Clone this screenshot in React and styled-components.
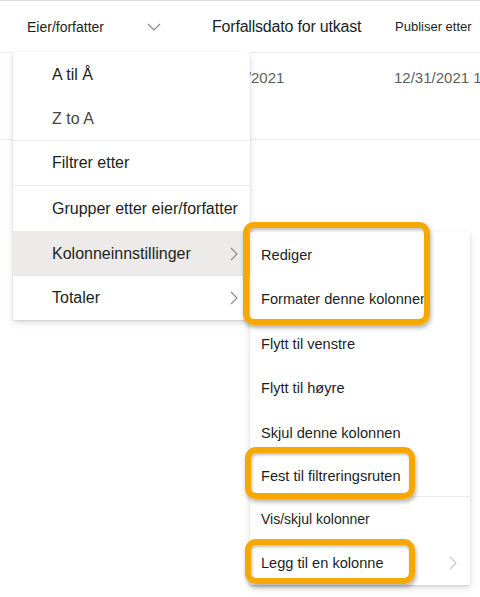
import React from "react";
import styled, { createGlobalStyle } from "styled-components";

const GlobalStyle = createGlobalStyle`
  html, body {
    margin: 0;
    padding: 0;
    background: #ffffff;
  }
  body {
    font-family: "Liberation Sans", Arial, sans-serif;
    color: #201f1e;
  }
`;

const Page = styled.div`
  position: relative;
  width: 480px;
  height: 597px;
  overflow: hidden;
  background: #fff;
`;

const HeaderRow = styled.div`
  display: flex;
  align-items: center;
  height: 51px;
  border-top: 1px solid #e1dfdd;
  border-bottom: 1px solid #edebe9;
`;

const HeaderCell = styled.div`
  display: flex;
  align-items: center;
  flex: none;
  width: ${(p) => p.$width}px;
  padding-left: ${(p) => p.$pad || 0}px;
  font-size: ${(p) => p.$size || 14}px;
  letter-spacing: ${(p) => p.$spacing || 0}px;
  color: #201f1e;
  white-space: nowrap;
  overflow: hidden;
  box-sizing: border-box;
`;

const HeaderChevron = styled.svg`
  margin-left: 43px;
  flex: none;
`;

const DataRow = styled.div`
  display: flex;
  align-items: flex-start;
  height: 87px;
  padding-top: 16px;
  border-bottom: 1px solid #edebe9;
  box-sizing: border-box;
`;

const DataCell = styled.div`
  flex: none;
  width: ${(p) => p.$width}px;
  padding-left: ${(p) => p.$pad || 0}px;
  font-size: 15px;
  color: #605e5c;
  white-space: nowrap;
  overflow: hidden;
  box-sizing: border-box;
`;

const Menu = styled.div`
  position: absolute;
  left: ${(p) => p.$left}px;
  top: ${(p) => p.$top}px;
  width: ${(p) => p.$width}px;
  background: #fff;
  box-shadow: 0 3.2px 7.2px rgba(0, 0, 0, 0.13), 0 0.6px 1.8px rgba(0, 0, 0, 0.11);
  display: flex;
  flex-direction: column;
`;

const Item = styled.div`
  display: flex;
  align-items: center;
  justify-content: space-between;
  height: ${(p) => p.$h || 44}px;
  padding-left: ${(p) => p.$pad}px;
  padding-right: ${(p) => p.$padRight || 14}px;
  font-size: ${(p) => p.$size || 15}px;
  color: ${(p) => (p.$muted ? "#484644" : "#201f1e")};
  background: ${(p) => (p.$active ? "#edebe9" : "transparent")};
  white-space: nowrap;
`;

const Divider = styled.div`
  height: 1px;
  background: #edebe9;
`;

const Highlight = styled.div`
  position: absolute;
  left: ${(p) => p.$left}px;
  top: ${(p) => p.$top}px;
  width: ${(p) => p.$width}px;
  height: ${(p) => p.$height}px;
  border: 6px solid #f7a800;
  border-radius: 11px;
  box-sizing: border-box;
  box-shadow: 1px 3px 4px rgba(0, 0, 0, 0.3), inset 1px 2px 3px rgba(0, 0, 0, 0.25);
  pointer-events: none;
`;

const Chevron = ({ color = "#8a8886" }) => (
  <svg width="8" height="14" viewBox="0 0 8 14" fill="none">
    <path d="M1 1l6 6-6 6" stroke={color} strokeWidth="1.1" />
  </svg>
);

const mainItems = [
  { label: "A til Å", h: 45 },
  { label: "Z to A", h: 43, muted: true, dividerAfter: true },
  { label: "Filtrer etter", h: 44, dividerAfter: true },
  { label: "Grupper etter eier/forfatter", h: 45 },
  { label: "Kolonneinnstillinger", h: 45, active: true, sub: true },
  { label: "Totaler", h: 44, sub: true },
];

const subItems = [
  { label: "Rediger", h: 45 },
  { label: "Formater denne kolonnen", h: 44 },
  { label: "Flytt til venstre", h: 45 },
  { label: "Flytt til høyre", h: 44 },
  { label: "Skjul denne kolonnen", h: 45 },
  { label: "Fest til filtreringsruten", h: 41, dividerAfter: true },
  { label: "Vis/skjul kolonner", h: 44, size: 14 },
  { label: "Legg til en kolonne", h: 44, sub: true, subColor: "#c8c6c4" },
];

export default function App() {
  return (
    <Page>
      <GlobalStyle />
      <HeaderRow>
        <HeaderCell $width={212} $pad={27} $size={14}>
          Eier/forfatter
          <HeaderChevron width="14" height="8" viewBox="0 0 14 8" fill="none">
            <path d="M1 1l6 6 6-6" stroke="#8a8886" strokeWidth="1.1" />
          </HeaderChevron>
        </HeaderCell>
        <HeaderCell $width={183} $size={16} $spacing={-0.2}>
          Forfallsdato for utkast
        </HeaderCell>
        <HeaderCell $width={85} $size={13}>
          Publiser etter
        </HeaderCell>
      </HeaderRow>
      <DataRow>
        <DataCell $width={146} />
        <DataCell $width={248} $pad={80}>
          1/5/2021
        </DataCell>
        <DataCell $width={86}>12/31/2021 10:00</DataCell>
      </DataRow>

      <Menu $left={13} $top={52} $width={237}>
        {mainItems.map((it) => (
          <React.Fragment key={it.label}>
            <Item
              $pad={39}
              $h={it.h}
              $size={16}
              $active={it.active}
              $muted={it.muted}
              $padRight={12}
            >
              {it.label}
              {it.sub && <Chevron />}
            </Item>
            {it.dividerAfter && <Divider />}
          </React.Fragment>
        ))}
      </Menu>

      <Menu $left={250} $top={232} $width={220}>
        {subItems.map((it) => (
          <React.Fragment key={it.label}>
            <Item $pad={11} $h={it.h} $size={it.size || 14.6} $padRight={13}>
              {it.label}
              {it.sub && <Chevron color={it.subColor} />}
            </Item>
            {it.dividerAfter && <Divider />}
          </React.Fragment>
        ))}
      </Menu>

      <Highlight $left={243} $top={222} $width={187} $height={103} />
      <Highlight $left={245} $top={447} $width={170} $height={52} />
      <Highlight $left={245} $top={539} $width={170} $height={45} />
    </Page>
  );
}
